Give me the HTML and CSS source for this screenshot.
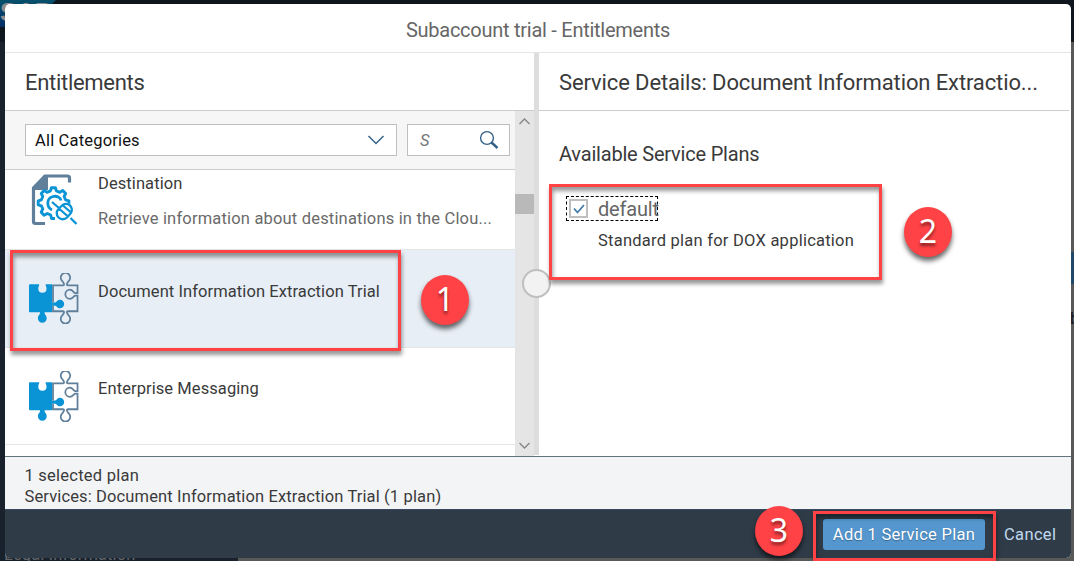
FILE: index.html
```html
<!DOCTYPE html>
<html lang="en">
<head>
<meta charset="utf-8">
<title>Subaccount trial - Entitlements</title>
<link rel="stylesheet" href="styles.css">
</head>
<body>
<svg class="symbols" aria-hidden="true">
  <symbol id="puzzle" viewBox="0 0 52 52" preserveAspectRatio="none">
    <path fill="#0a94d6" d="M2 11.500h9.300c.5 1.200-.8 1.900-.8 4.500a4.200 4.200 0 0 0 8.400 0c0-2.600-1.500-3.300-.8-4.500H24.500V30h2.800c2 0 2.500-2.800 5.200-2.800a4.400 4.400 0 0 1 0 8.800c-2.700 0-3.200-2.700-5.200-2.700h-2.800V40H17c-.8 2 2.100 2.800 2.100 6.200a4.500 4.500 0 0 1-9 0c0-3.400 2.900-4.200 2.100-6.200H2q-1 0-1-1V12.500q0-1 1-1z"/>
    <path fill="none" stroke="#5f7f9b" stroke-width="1.800" d="M25.500 30V12.500h10c2.800 0 .2-3.200-.6-4.300a4.800 4.800 0 1 1 6.600 0c-.8 1.100-3.400 4.300-.6 4.300H50.500v8h-2.300c-1.500 0-2.500-3.500-5.500-3.500a4.500 4.500 0 0 0 0 9.300c3 0 4-3.200 5.500-3.200h2.300V39h-9.600c-2.800 0-.2 3.200.6 4.300a4.800 4.800 0 1 1-6.600 0c.8-1.100 3.400-4.300.6-4.300h-10v-5.500"/>
  </symbol>
</svg>
<div class="backdrop">
  <div class="page-logo">SAP</div>
  <div class="page-side"></div>
  <div class="page-action"></div>
  <div class="page-link">b</div>
  <div class="page-footer">Legal Information</div>
</div>
<main class="dialog">
  <header class="dialog-title"><span class="t-title">Subaccount trial - Entitlements</span></header>
  <div class="content">
    <section class="master">
      <h2 class="panel-title"><span class="t-ent">Entitlements</span></h2>
      <div class="master-body">
        <div class="master-main">
          <div class="filters">
            <div class="select"><span class="t-cat">All Categories</span>
              <svg width="18" height="10" viewBox="0 0 18 10"><path d="M1.500 1 9 8.500 16.500 1" fill="none" stroke="#346187" stroke-width="1.500"/></svg>
            </div>
            <div class="search"><span>S</span>
              <svg width="20" height="20" viewBox="0 0 20 20" fill="none" stroke="#346187"><circle cx="8" cy="8" r="6.400" stroke-width="1.400"/><path d="m12.500 12.500 6 5.500" stroke-width="2.400"/></svg>
            </div>
          </div>
          <div class="list">
            <article class="item item-first">
              <svg class="item-icon" viewBox="0 0 52 52" fill="none">
                <path d="M42.500 8.500V4q0-2-2-2H18L6.500 14v33.500q0 2 2 2H18" stroke="#5f7f9b" stroke-width="3.200"/>
                <path d="M5 16 17 1h4v15z" fill="#5f7f9b"/>
                <path stroke="#0a94d6" stroke-width="2.900" stroke-linejoin="round" d="M28 44.500h-3.500l-.8-3.500-3.400-1.500-3.300 1.700-2.800-3 1.600-3.200-1.400-3.200-3.200-1v-4l3.200-1 1.400-3.300-1.600-3 2.900-2.900 3 1.700 3.300-1.400 1-3.200h4l1 3.200 3.400 1.400 3-1.700 2.900 2.900-1.600 3 1.400 3.300 3.400 1v3"/>
                <path stroke="#0a94d6" stroke-width="2.800" d="M25 36c-6-3-5.500-12 1-13.500 4-1 7.500 1 8 4"/>
                <path stroke="#0a94d6" stroke-width="2.300" d="m25 28 7 6m11.500 10 6 6M31.500 35l3-3a5.600 5.600 0 0 1 9 7.500l-3.500 4a5.600 5.600 0 0 1-8.500-8.500zm1 0 8.500 7.500m-5-11 8 7"/>
              </svg>
              <div class="item-text"><h3 class="t-dest">Destination</h3><p class="t-retrieve">Retrieve information about destinations in the Clou...</p></div>
            </article>
            <article class="item selected">
              <svg class="item-icon"><use href="#puzzle" width="51" height="51" x="1"/></svg>
              <div class="item-text"><h3 class="t-doc">Document Information Extraction Trial</h3></div>
            </article>
            <article class="item">
              <svg class="item-icon"><use href="#puzzle" width="51" height="51" x="1"/></svg>
              <div class="item-text"><h3 class="t-msg">Enterprise Messaging</h3></div>
            </article>
          </div>
        </div>
        <div class="scrollbar">
          <svg width="11" height="7" viewBox="0 0 11 7"><path d="M.5 6 5.500 1l5 5" fill="none" stroke="#858585" stroke-width="1.300"/></svg>
          <div class="thumb"></div>
          <svg width="11" height="7" viewBox="0 0 11 7"><path d="m.5 1 5 5 5-5" fill="none" stroke="#858585" stroke-width="1.300"/></svg>
        </div>
      </div>
    </section>
    <div class="splitter"><div class="grip"></div></div>
    <section class="detail">
      <h2 class="panel-title"><span class="t-details">Service Details: Document Information Extractio...</span></h2>
      <div class="plans">
        <h3><span class="t-avail">Available Service Plans</span></h3>
        <div class="plan">
          <div class="plan-check">
            <div class="checkbox"><svg width="12" height="10" viewBox="0 0 12 10"><path d="m1 4.500 3.500 4L11 1" fill="none" stroke="#427cac" stroke-width="1.800"/></svg></div>
            <span class="t-default">default</span>
          </div>
          <p class="t-standard">Standard plan for DOX application</p>
        </div>
      </div>
    </section>
  </div>
  <div class="summary"><p class="t-sel">1 selected plan</p><p class="t-services">Services: Document Information Extraction Trial (1 plan)</p></div>
  <footer class="actions">
    <button class="primary"><span class="t-add">Add 1 Service Plan</span></button>
    <button class="cancel"><span class="t-cancel">Cancel</span></button>
  </footer>
</main>
<div class="mark mark-item"></div>
<div class="mark mark-plan"></div>
<div class="mark mark-add"></div>
<div class="badge badge-one">1</div>
<div class="badge badge-two">2</div>
<div class="badge badge-three">3</div>
</body>
</html>
```
FILE: styles.css
```css
* { box-sizing: border-box; margin: 0; }
body { width: 1074px; height: 561px; padding: 4px 3px 3px 5px; overflow: hidden; background: #171d26; font: 400 16.500px/20px Roboto, "Noto Sans", sans-serif; color: #3a3a3a; }
h2, h3 { font-weight: 400; }
button { border: 0; font: inherit; }
span, h3, p { white-space: nowrap; }
.symbols { position: absolute; width: 0; height: 0; }

.backdrop { position: absolute; inset: 0; overflow: hidden; background: linear-gradient(#10161d 0 42px, #19212c 42px); }
.backdrop > div { position: absolute; }
.page-logo { left: 0; top: 0; width: 56px; height: 27px; background: linear-gradient(#07506c, #062e66); clip-path: polygon(0 0, 100% 0, 50% 100%, 0 100%); color: #8d8d8d; font: 700 25px/25px "Liberation Sans", sans-serif; }
.page-side { right: 0; top: 42px; width: 836px; height: 519px; background: #595959; }
.page-action { right: 0; top: 252px; width: 3px; height: 32px; background: #20486b; }
.page-link { left: 1070px; top: 309px; color: #161616; }
.page-footer { left: 4px; top: 545px; color: #62666b; letter-spacing: .1px; }

.dialog { position: relative; display: flex; flex-direction: column; width: 1066px; height: 554px; overflow: hidden; border-radius: 5px; background: #fff; }
.dialog-title { height: 49px; padding-top: 15px; border-bottom: 1px solid #e5e5e5; text-align: center; font-size: 20px; line-height: 23px; color: #666; }
.content { display: flex; height: 403px; }
.master { display: flex; flex-direction: column; width: 529px; }
.panel-title { height: 58px; padding: 16px 0 0 20px; border-bottom: 1px solid #ccc; font-size: 22px; line-height: 28px; }
.master-body { display: flex; flex: 1; }
.master-main { width: 510px; overflow: hidden; }
.filters { display: flex; gap: 10px; height: 59px; padding: 13px 5px 0 20px; background: #f6f6f6; border-bottom: 1px solid #ccc; }
.select, .search { display: flex; align-items: center; justify-content: space-between; height: 32px; border: 1px solid #bfbfbf; background: #fff; color: #111; }
.select { width: 372px; padding: 0 11px 0 9px; }
.select span, .search span { padding-top: 2px; }
.search { width: 103px; padding: 0 10px 0 12px; color: #757575; font-style: italic; }
.item { display: flex; gap: 18px; height: 97px; padding: 23px 0 0 23px; border-bottom: 1px solid #e5e5e5; }
.item-first { height: 80px; padding-top: 4px; }
.selected { height: 98px; background: #e7eef6; }
.item-icon { width: 52px; height: 52px; flex: none; margin-left: -1px; }
.item-text { padding: 8px 0 0 1px; }
.selected .item-text { padding-top: 9px; }
.item-first .item-text { padding-top: 0; }
.item h3 { font-size: 16.500px; line-height: 20px; }
.item-text p { margin-top: 15px; color: #6a6a6a; }
.scrollbar { display: flex; flex-direction: column; align-items: center; width: 19px; padding: 7px 0; background: #e5e5e5; }
.thumb { width: 19px; height: 20px; margin: 69px 0 auto; background: #b9b9b9; }
.splitter { position: relative; width: 5px; height: 402px; background: #ddd; }
.grip { position: absolute; z-index: 1; left: -12px; top: 216px; width: 29px; height: 29px; border: 2px solid #bfbfbf; border-radius: 50%; background: #f2f2f2; }
.detail { flex: 1; margin-right: 2px; }
.plans { padding: 31px 0 0 20px; }
.plans h3 { font-size: 20px; line-height: 24px; }
.plan { padding: 30px 0 0 7px; }
.plan-check { display: flex; align-items: center; gap: 10px; width: 92px; height: 25px; padding-left: 2px; border: 1px dashed #000; font-size: 20px; color: #666; }
.checkbox { display: grid; place-items: center; width: 19px; height: 19px; flex: none; border: 2px solid #bfbfbf; }
.plan p { margin: 10px 0 0 32px; }
.summary { height: 54px; padding: 8px 19.500px 0; border-top: 1px solid #62757c; border-bottom: 1px solid #354a5f; background: #f3f4f6; line-height: 21px; }
.actions { display: flex; align-items: center; justify-content: flex-end; flex: 1; padding: 1px 11px 0 0; background: #2f3c48; }
.primary { width: 162px; height: 31px; padding: 0; border-radius: 3px; background: #5496cd; color: #fff; text-shadow: 0 1px 1px #346690; }
.cancel { width: 72px; padding: 0 0 0 16px; margin-left: 3px; text-align: left; background: none; color: #c1d9ef; }

/* Tracking per label */
.t-title { letter-spacing: -.26px; }
.t-ent { letter-spacing: -.3px; }
.t-cat { letter-spacing: .18px; }
.t-retrieve { letter-spacing: .18px; }
.t-dest, .t-msg, .t-doc { letter-spacing: .08px; }
.t-details { letter-spacing: -.12px; }
.t-avail { letter-spacing: -.2px; }
.t-default { letter-spacing: -.2px; }
.t-standard { letter-spacing: .24px; }
.t-sel { letter-spacing: .24px; }
.t-services { letter-spacing: .13px; }
.t-add { letter-spacing: .29px; }
.t-cancel { letter-spacing: .35px; }

.mark { position: absolute; z-index: 2; border: 3px solid #fe4245; box-shadow: 1px 4px 4px #0006, inset 1px 4px 4px #0006; }
.mark-item { left: 10px; top: 250px; width: 391px; height: 101px; }
.mark-plan { left: 549px; top: 184px; width: 333px; height: 96px; }
.mark-add { left: 813px; top: 511px; width: 183px; height: 50px; }
.badge { position: absolute; z-index: 3; width: 48px; height: 50px; border-radius: 50%; background: #fe4245; box-shadow: 0 4px 5px #0009; color: #fff; text-align: center; font: 400 32px/47px "Noto Sans", sans-serif; text-shadow: 0 3px 3px #0007; }
.badge-one { left: 421px; top: 275px; }
.badge-two { left: 904px; top: 207px; }
.badge-three { left: 755px; top: 506px; }
```
